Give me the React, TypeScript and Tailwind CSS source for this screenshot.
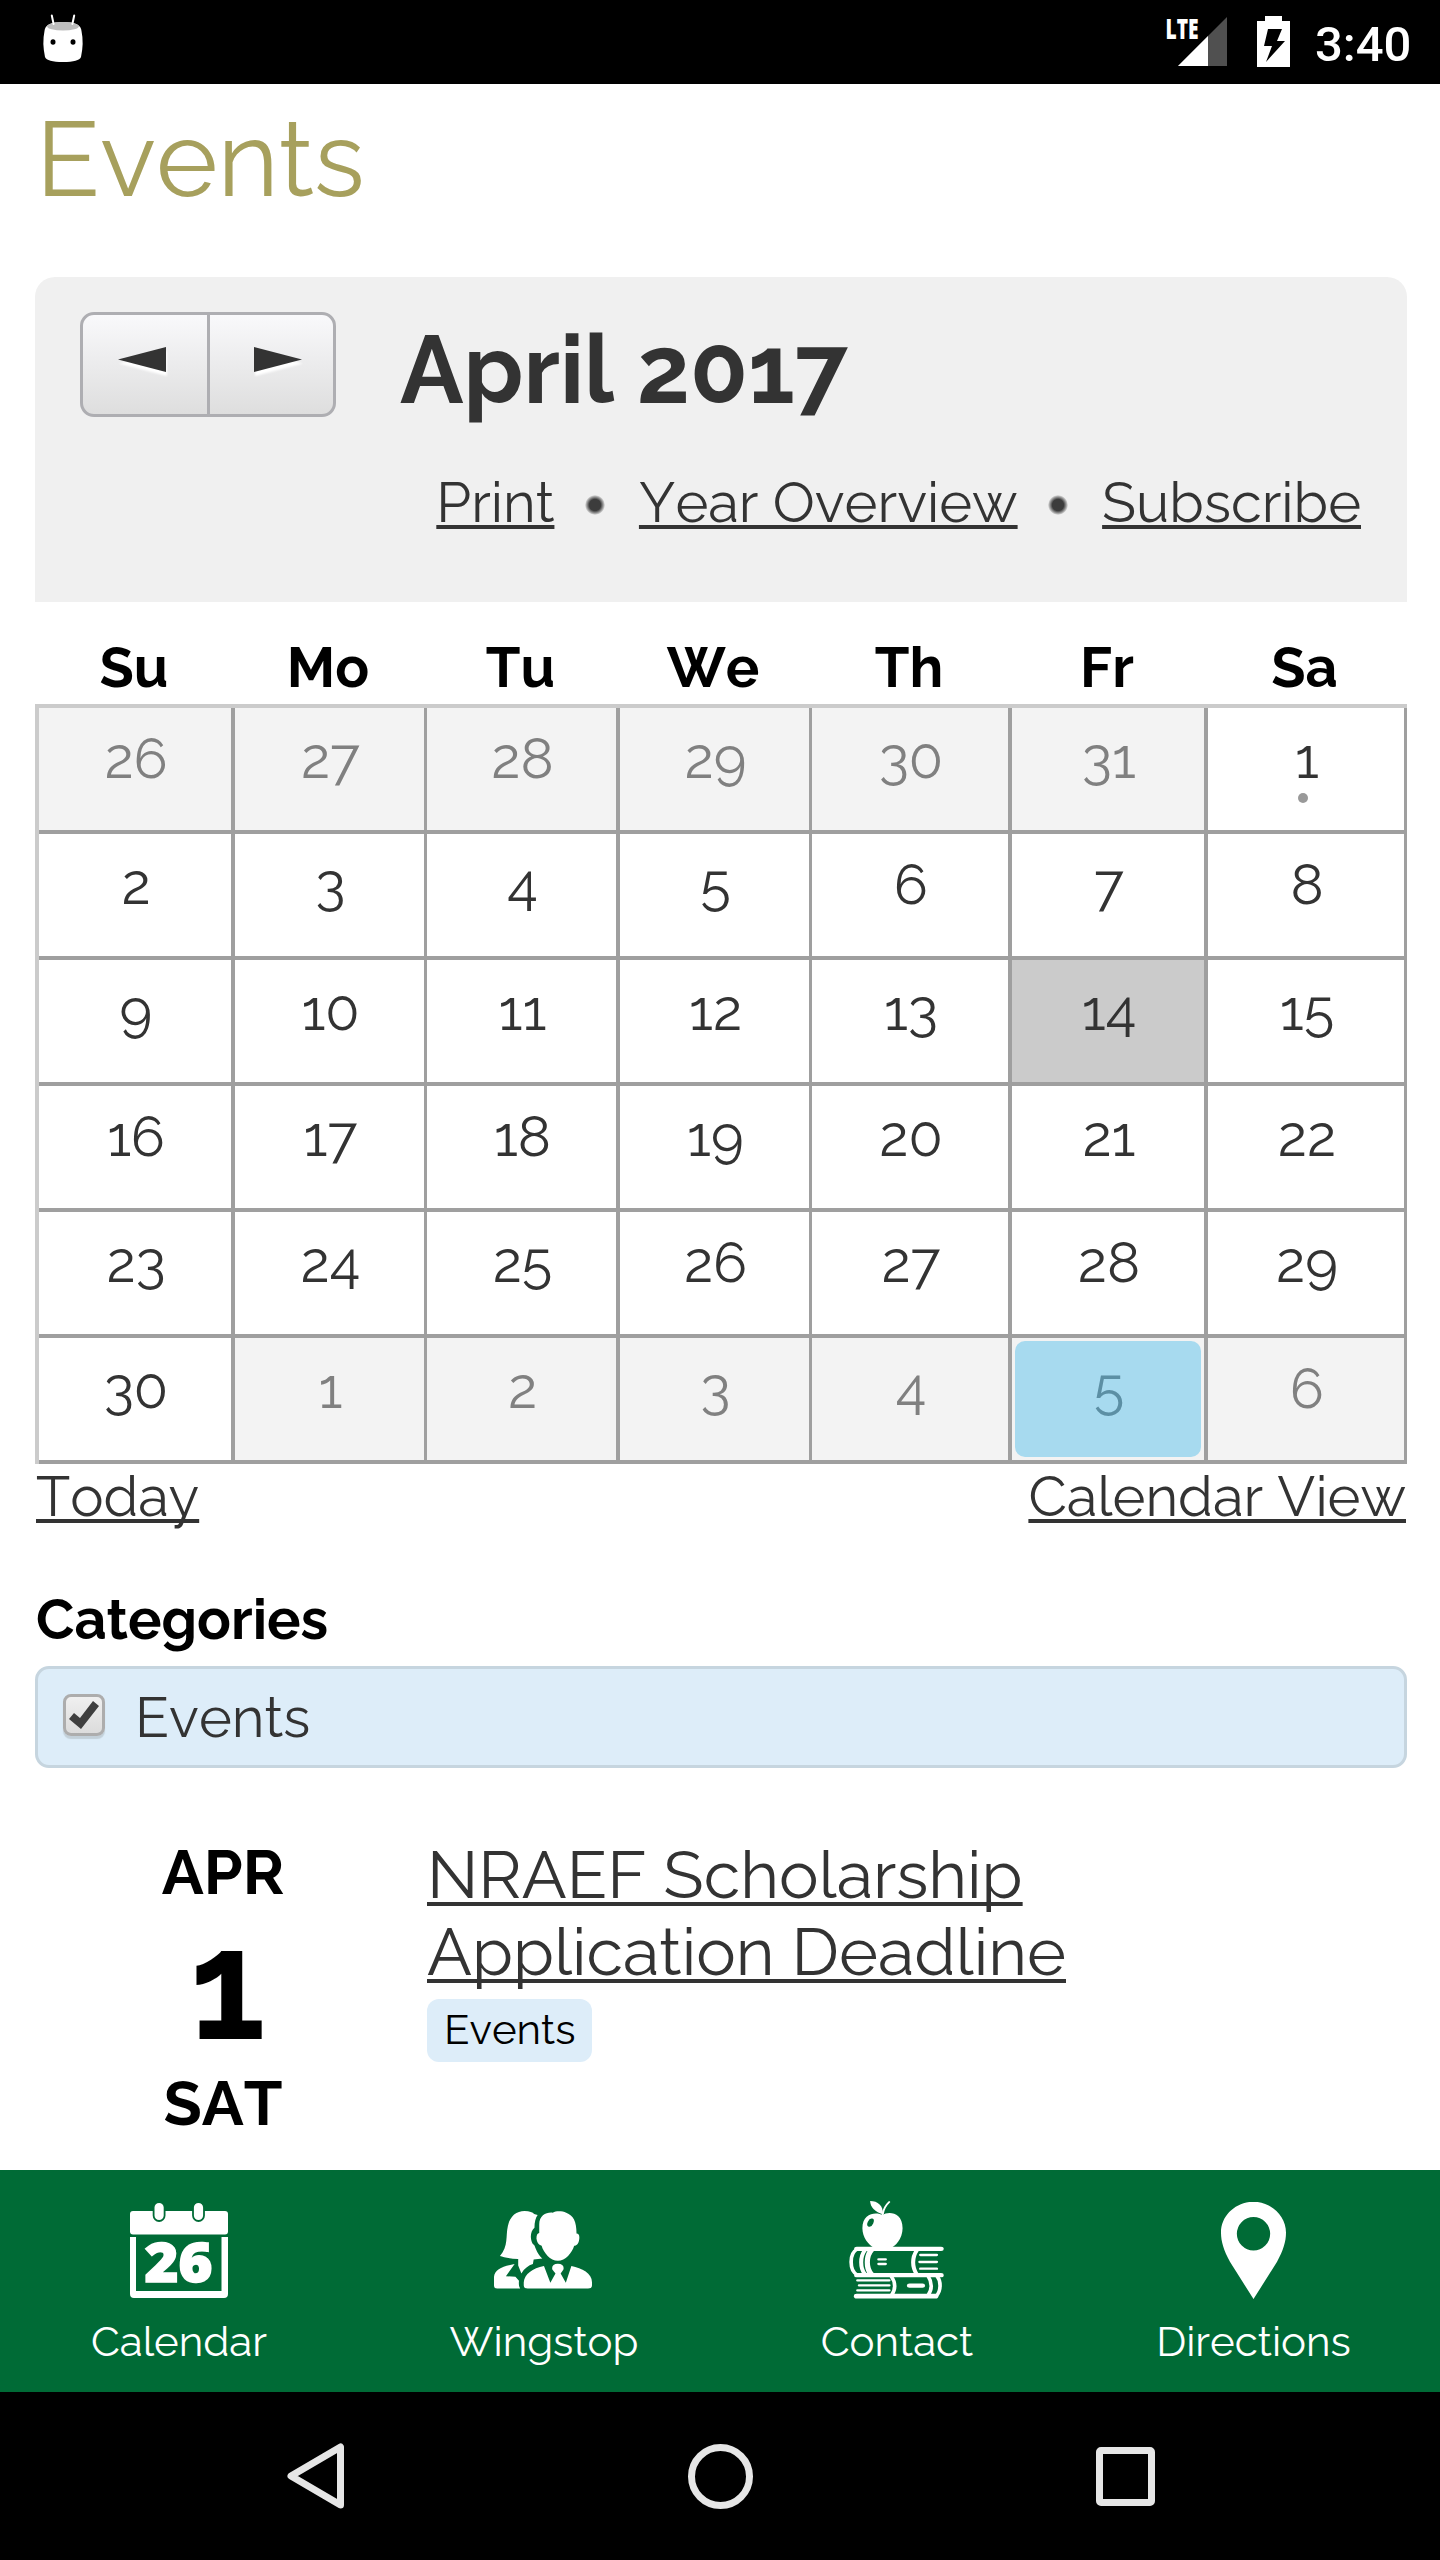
import React from "react";

type Day = { n: number; kind?: "out" | "event" | "today" | "picked" };

const out = (n: number): Day => ({ n, kind: "out" });

const weekdays = ["Su", "Mo", "Tu", "We", "Th", "Fr", "Sa"];

const days: Day[] = [
  ...[26, 27, 28, 29, 30, 31].map(out),
  { n: 1, kind: "event" },
  ...Array.from({ length: 12 }, (_, i): Day => ({ n: i + 2 })),
  { n: 14, kind: "today" },
  ...Array.from({ length: 16 }, (_, i): Day => ({ n: i + 15 })),
  ...[1, 2, 3, 4].map(out),
  { n: 5, kind: "picked" },
  out(6),
];

const columnBorders = ["border-r-4", "border-r-3", "border-r-4", "border-r-3", "border-r-4", "border-r-4", "border-r-3"];

function StatusBar() {
  return (
    <header className="flex h-[84px] items-start bg-black">
      <svg className="mt-[14px] ml-[42px] h-12 w-[42px]" viewBox="42 14 42 48">
        <path d="M44.500 31Q45 22 63 22T81.500 31Q84 43 81 57Q79 62 63 62T45 57Q42 43 44.500 31Z" fill="#fff" />
        <ellipse cx="63" cy="26.300" rx="16" ry="4.300" fill="#bdbdbd" />
        <path d="M51.800 15.500L53.600 24M74.200 15.500L72.400 24" stroke="#fff" strokeWidth="2" strokeLinecap="round" />
        <ellipse cx="53" cy="42" rx="2.500" ry="2.700" />
        <ellipse cx="73" cy="42" rx="2.500" ry="2.700" />
      </svg>
      <svg className="mt-[6px] ml-[1081px] h-[61px] w-[63px] overflow-visible" viewBox="1165 6 63 61">
        <path d="M1178 66L1227 17V66Z" fill="#505050" />
        <path d="M1178 66L1208 36V66Z" fill="#fff" />
        <text x="1165.500" y="39" textLength="33" lengthAdjust="spacingAndGlyphs" className="fill-white font-['Open_Sans',sans-serif] text-[29px] font-extrabold">
          LTE
        </text>
      </svg>
      <svg className="mt-[16px] ml-[29px] h-[51px] w-[33px]" viewBox="0 0 33 51">
        <path d="M8 0H25V5H33V51H0V5H8Z" fill="#fff" />
        <path d="M11 13H25L20 25H28L9 46L15 30H7Z" fill="#000" />
      </svg>
      <span className="ml-[25px] pt-[15px] font-[Roboto,sans-serif] text-[49px] leading-[60px] font-medium text-white">3:40</span>
    </header>
  );
}

function CalendarHead() {
  return (
    <section className="ml-[35px] h-[325px] w-[1372px] rounded-t-[20px] bg-[#f0f0f0] pt-[35px]">
      <div className="flex h-[116px] items-start">
        <div className="ml-[45px] flex h-[105px] w-[256px] divide-x-[3px] divide-[#aeaeb2] rounded-[14px] border-[3px] border-[#aeaeb2] bg-linear-to-b from-[#f9f9fb] to-[#dedede]">
          <button className="flex w-[127px] justify-center pt-8 pr-[7px]" aria-label="Previous month">
            <svg className="h-[25px] w-[48px] overflow-visible drop-shadow-[1px_4px_1px_#ffffff]" viewBox="0 0 48 25">
              <path d="M0 12.500L48 0V25Z" fill="#333" />
            </svg>
          </button>
          <button className="flex flex-1 justify-center pt-8 pl-3" aria-label="Next month">
            <svg className="h-[25px] w-[48px] overflow-visible drop-shadow-[1px_4px_1px_#ffffff]" viewBox="0 0 48 25">
              <path d="M48 12.500L0 0V25Z" fill="#333" />
            </svg>
          </button>
        </div>
        <h2 className="ml-[64px] text-[94.500px] leading-[116px] font-bold whitespace-nowrap">April 2017</h2>
      </div>
      <nav className="flex items-center justify-end pr-[46px] leading-[148px]">
        <a className="underline decoration-[4px] underline-offset-[3px]">Print</a>
        <Bullet />
        <a className="underline decoration-[4px] underline-offset-[3px]">Year Overview</a>
        <Bullet />
        <a className="underline decoration-[4px] underline-offset-[3px]">Subscribe</a>
      </nav>
    </section>
  );
}

function Bullet() {
  return <span className="mt-[6px] mr-[34px] ml-[30.500px] size-5 rounded-full bg-radial from-[#3c3c3c] from-40% to-[#f0f0f0] to-72%" />;
}

function DayCell({ day, border }: { day: Day; border: string }) {
  if (day.kind === "picked") {
    return (
      <div className={`h-[126px] border-b-4 border-[#9f9f9f] bg-[#f3f3f3] p-[3px] ${border}`}>
        <div className="h-[116px] rounded-[10px] bg-[#a7daef] pl-[2px] text-center leading-[94px] text-[#5c8fa4]">{day.n}</div>
      </div>
    );
  }
  const tone =
    day.kind === "out" ? "bg-[#f3f3f3] text-[#808080]" : day.kind === "today" ? "bg-[#cbcbcb]" : "bg-white";
  return (
    <div className={`h-[126px] border-b-4 border-[#9f9f9f] pl-[2px] text-center leading-[100px] ${border} ${tone}`}>
      {day.n}
      {day.kind === "event" && <span className="mx-auto -mt-[15px] block size-[10px] -translate-x-1 rounded-full bg-[#999]" />}
    </div>
  );
}

function MonthGrid() {
  return (
    <section className="mx-[35px] w-[1372px]">
      <div className="grid h-[102px] grid-cols-[196px_192px_193px_192px_200px_196px_199px] pt-7 pl-px text-center leading-[74px] font-bold text-black">
        {weekdays.map((d) => (
          <span key={d}>{d}</span>
        ))}
      </div>
      <div className="grid grid-cols-[196px_192px_193px_192px_200px_196px_199px] border-t-4 border-l-4 border-[#cbcbcb]">
        {days.map((d, i) => (
          <DayCell key={i} day={d} border={columnBorders[i % 7]} />
        ))}
      </div>
      <div className="flex justify-between px-px leading-[64px]">
        <a className="underline decoration-[4px] underline-offset-[3px]">Today</a>
        <a className="underline decoration-[4px] underline-offset-[3px]">Calendar View</a>
      </div>
    </section>
  );
}

function Categories() {
  return (
    <section className="mt-[54px] ml-[35px] w-[1372px]">
      <h3 className="pl-px leading-[74px] font-bold text-black">Categories</h3>
      <label className="mt-[10px] flex h-[102px] items-center rounded-[14px] border-[3px] border-[#c6d5df] bg-[#ddedf9]">
        <span className="-mt-1 ml-[25px] flex size-[42px] items-center justify-center rounded-[8px] border-[3px] border-[#adadad] bg-linear-to-b from-[#f0f0f0] to-[#dcdcdc] shadow-[0_3px_1px_#c3d0d9]">
          <svg className="h-[29px] w-[30px]" viewBox="0 0 30 29">
            <path d="M0 18L5 12L11 17L24 0L30 5L12 28Z" fill="#3f3f3f" />
          </svg>
        </span>
        <span className="ml-[30px]">Events</span>
      </label>
    </section>
  );
}

function EventItem() {
  return (
    <article className="flex h-[402px] items-start pt-[67px] pl-[35px]">
      <div className="w-[376px] text-center text-[62.500px] font-bold text-black">
        <div className="leading-[75px]">APR</div>
        <div className="pl-[9px] text-[153px] leading-[151px]">1</div>
        <div className="leading-[84px]">SAT</div>
      </div>
      <div className="ml-4 pt-px">
        <a className="block w-[700px] text-[66.500px] leading-[77px] underline decoration-[4px] underline-offset-[4px]">
          NRAEF Scholarship Application Deadline
        </a>
        <span className="mt-[9px] block h-[63px] w-fit rounded-[12px] bg-[#ddedf9] px-[17px] text-[42px] leading-[62px] text-black">
          Events
        </span>
      </div>
    </article>
  );
}

function CalendarIcon() {
  return (
    <svg className="h-[97px] w-[98px]" viewBox="130 2202 98 97">
      <rect x="130" y="2211" width="98" height="23.500" rx="3" fill="#fff" />
      <rect x="153.600" y="2202" width="11" height="19" rx="5.500" fill="#fff" stroke="#006b36" strokeWidth="1.800" />
      <rect x="193" y="2202" width="11" height="19" rx="5.500" fill="#fff" stroke="#006b36" strokeWidth="1.800" />
      <path d="M130 2237H136V2291H221.500V2237H228V2294Q228 2298 224 2298H134Q130 2298 130 2294Z" fill="#fff" />
      <text x="144.500" y="2281.500" textLength="68" lengthAdjust="spacingAndGlyphs" className="fill-white stroke-white stroke-[1.500px] font-['Open_Sans',sans-serif] text-[54px] font-extrabold">
        26
      </text>
    </svg>
  );
}

function PeopleIcon() {
  return (
    <svg className="mr-[2px] h-[77.500px] w-[98px]" viewBox="1098 155 247 232" preserveAspectRatio="none" fill="#fff">
      <path d="M1113 290C1135 260 1127 230 1133 200C1138 170 1155 155 1175 155C1188 155 1196 159 1199 164L1208 167C1203 175 1200 188 1200 205C1190 215 1188 235 1195 252L1200 258C1205 275 1212 290 1220 297L1198 300L1196 314C1185 318 1174 328 1167 342L1159 318V299C1140 298 1122 294 1113 290Z" />
      <path d="M1150 314L1128 350L1152 352L1161 364C1160 375 1161 382 1164 387H1106Q1098 387 1098 378V352C1100 330 1120 320 1150 314Z" />
      <path d="M1212 195C1212 168 1230 158 1246 160C1255 154 1270 155 1280 160C1298 168 1306 185 1306 222Q1314 222 1313 237C1312 252 1307 258 1300 259C1295 280 1278 304 1259 304C1240 304 1223 280 1218 259C1210 256 1206 248 1205 237Q1205 222 1212 221Z" />
      <path d="M1224 320L1240 370L1253 342L1245 330Q1242 314 1259 313Q1276 314 1273 330L1266 342L1279 370L1293 320C1320 326 1345 342 1345 368V378Q1345 387 1335 387H1183Q1173 387 1173 378V368C1175 345 1195 326 1224 320Z" />
    </svg>
  );
}

function BooksIcon() {
  return (
    <svg className="mr-[2px] h-[98px] w-[95px]" viewBox="217 126 234 294" preserveAspectRatio="none" fill="none" stroke="#fff" strokeLinecap="round">
      <g stroke="none" fill="#fff">
        <path d="M300 168C310 158 349 155 349 208C349 240 330 264 318 268H280C265 258 250 235 250 208C250 160 285 158 300 168Z" />
        <path d="M269 126C288 126 302 140 300 166C280 158 270 145 269 126Z" />
      </g>
      <path d="M300 166C302 150 308 138 316 129" strokeWidth="5" />
      <ellipse cx="270" cy="191" rx="7" ry="13" transform="rotate(20 270 191)" fill="#006b36" stroke="none" />
      <path d="M236 269.500H444M236 348.500H444" strokeWidth="13" />
      <path d="M238 270C217 282 217 336 238 348" strokeWidth="9" />
      <path d="M256 274C244 292 244 328 256 345M274 274C260 292 260 328 274 345M384 274C372 295 372 325 384 346" strokeWidth="10" />
      <path d="M265 276C256 294 256 326 265 344" strokeWidth="5" />
      <path d="M393 288H433M391 309H433M393 329H433" strokeWidth="7" />
      <path d="M290 301H307M290 315H307" strokeWidth="7" />
      <path d="M236 411.500H430" strokeWidth="14" />
      <path d="M434 352C444 366 444 396 432 411M412 352C422 370 422 392 412 408M322 354C332 370 332 392 322 408" strokeWidth="9" />
      <path d="M238 364H316M242 379H316M238 394H316" strokeWidth="7" />
      <path d="M366 380H398" strokeWidth="13" />
    </svg>
  );
}

function PinIcon() {
  return (
    <svg className="mr-px h-[97px] w-[65px]" viewBox="1128 126 160 290" preserveAspectRatio="none">
      <path
        fill="#fff"
        fillRule="evenodd"
        d="M1208 416L1150 305C1135 270 1128 245 1128 218C1128 165 1165 126 1208 125C1250 126 1288 165 1288 218C1288 245 1281 270 1266 305ZM1167 221A41 50 0 1 0 1249 221A41 50 0 1 0 1167 221Z"
      />
    </svg>
  );
}

const tabs = [
  { label: "Calendar", icon: <CalendarIcon /> },
  { label: "Wingstop", icon: <PeopleIcon /> },
  { label: "Contact", icon: <BooksIcon /> },
  { label: "Directions", icon: <PinIcon /> },
];

function TabBar() {
  return (
    <nav className="grid h-[222px] grid-cols-[358px_372px_334px_379px] overflow-hidden bg-[#006b36] pt-[31px] text-[42px] leading-[50px] text-white">
      {tabs.map((t) => (
        <div key={t.label} className="flex flex-col items-center">
          <span className="flex h-[98px] items-center">{t.icon}</span>
          <span className="mt-[18px]">{t.label}</span>
        </div>
      ))}
    </nav>
  );
}

function SystemNav() {
  return (
    <footer className="flex h-[168px] items-center bg-black pl-[287px]">
      <svg className="h-[66px] w-[57px]" viewBox="287 2444 57 66">
        <path d="M340.500 2448V2506L291 2477Z" fill="none" stroke="#e6e6e6" strokeWidth="7" strokeLinejoin="round" />
      </svg>
      <span className="ml-[344px] size-[65px] rounded-full border-[7px] border-[#e6e6e6]" />
      <span className="ml-[343px] size-[59px] rounded-[5px] border-[7px] border-[#e6e6e6]" />
    </footer>
  );
}

export default function App() {
  return (
    <main className="h-[2560px] w-[1440px] overflow-hidden bg-white font-[Raleway,Lato,sans-serif] text-[56px] font-normal text-[#333] [font-kerning:none] [text-decoration-skip-ink:none]">
      <StatusBar />
      <h1 className="mb-[42px] pl-9 text-[105px] leading-[151px] text-[#a7a05d]">Events</h1>
      <CalendarHead />
      <MonthGrid />
      <Categories />
      <EventItem />
      <TabBar />
      <SystemNav />
    </main>
  );
}
